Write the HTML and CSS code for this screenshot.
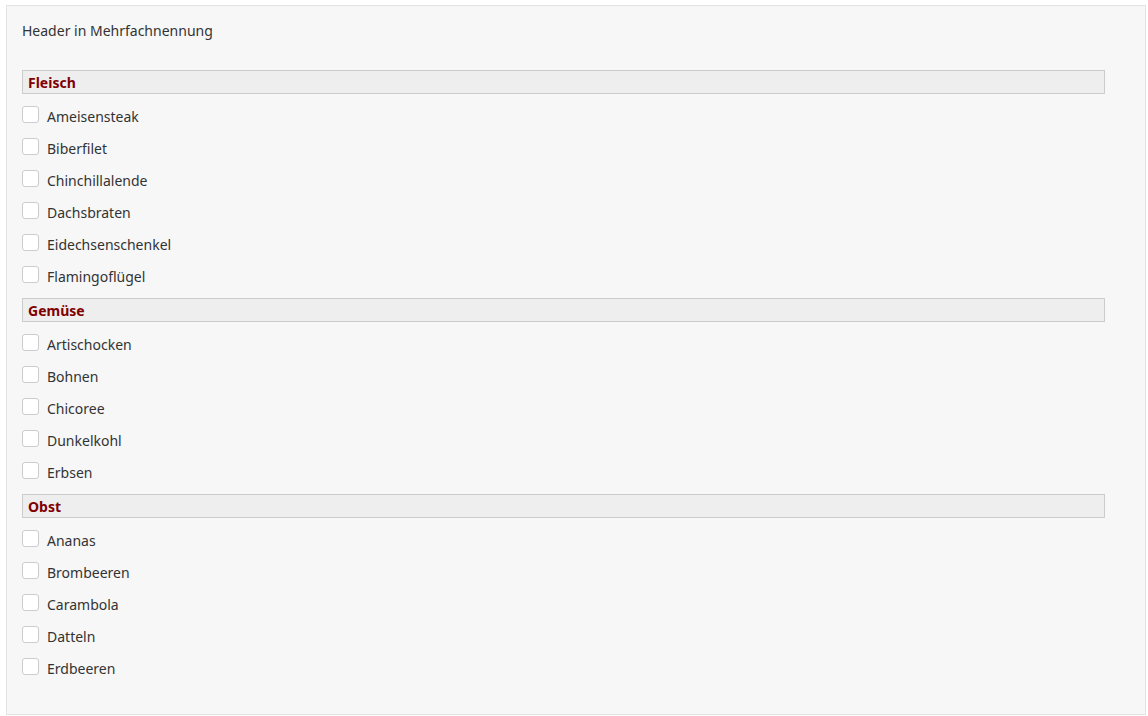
FILE: index.html
```html
<!DOCTYPE html>
<html lang="de">
<head>
<meta charset="utf-8">
<title>Mehrfachnennung</title>
<link rel="stylesheet" href="styles.css">
</head>
<body>
<div class="panel">
  <div class="title">Header in Mehrfachnennung</div>
  <div class="group">
    <div class="group-head">Fleisch</div>
    <label class="item"><span class="box"></span><span class="label">Ameisensteak</span></label>
    <label class="item"><span class="box"></span><span class="label">Biberfilet</span></label>
    <label class="item"><span class="box"></span><span class="label">Chinchillalende</span></label>
    <label class="item"><span class="box"></span><span class="label">Dachsbraten</span></label>
    <label class="item"><span class="box"></span><span class="label">Eidechsenschenkel</span></label>
    <label class="item"><span class="box"></span><span class="label">Flamingoflügel</span></label>
  </div>
  <div class="group">
    <div class="group-head">Gemüse</div>
    <label class="item"><span class="box"></span><span class="label">Artischocken</span></label>
    <label class="item"><span class="box"></span><span class="label">Bohnen</span></label>
    <label class="item"><span class="box"></span><span class="label">Chicoree</span></label>
    <label class="item"><span class="box"></span><span class="label">Dunkelkohl</span></label>
    <label class="item"><span class="box"></span><span class="label">Erbsen</span></label>
  </div>
  <div class="group">
    <div class="group-head">Obst</div>
    <label class="item"><span class="box"></span><span class="label">Ananas</span></label>
    <label class="item"><span class="box"></span><span class="label">Brombeeren</span></label>
    <label class="item"><span class="box"></span><span class="label">Carambola</span></label>
    <label class="item"><span class="box"></span><span class="label">Datteln</span></label>
    <label class="item"><span class="box"></span><span class="label">Erdbeeren</span></label>
  </div>
</div>
</body>
</html>
```
FILE: styles.css
```css
html, body {
  margin: 0;
  padding: 0;
  background: #ffffff;
}
body {
  font-family: "Noto Sans", "Open Sans", sans-serif;
  font-size: 14px;
  color: #333333;
}
.panel {
  box-sizing: border-box;
  margin: 5px 2px 0 6px;
  width: 1140px;
  height: 710px;
  background: #f7f7f7;
  border: 1px solid #e3e3e3;
  padding: 15px 15px 28px 15px;
}
.title {
  line-height: 20px;
  margin-bottom: 25px;
}
.group {
  display: flex;
  flex-direction: column;
  margin-right: 25px;
}
.group-head {
  box-sizing: border-box;
  height: 24px;
  line-height: 22px;
  padding: 1px 5px 0 5px;
  background: #eeeeee;
  border: 1px solid #cccccc;
  color: #800000;
  font-weight: bold;
  margin-top: 4px;
  margin-bottom: 8px;
}
.item {
  display: flex;
  align-items: flex-start;
  height: 32px;
  cursor: pointer;
}
.box {
  box-sizing: border-box;
  width: 17px;
  height: 17px;
  margin-top: 4px;
  background: #ffffff;
  border: 1px solid #cccccc;
  border-radius: 3px;
  flex: none;
}
.label {
  margin-left: 8px;
  line-height: 20px;
  padding-top: 5px;
}
```
